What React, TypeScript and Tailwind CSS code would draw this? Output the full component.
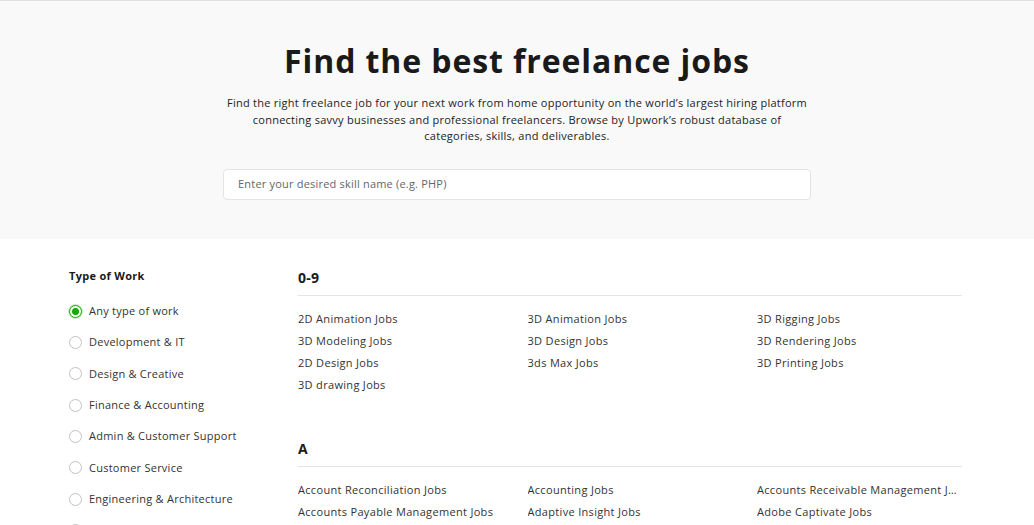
import React from "react";

const types = [
  "Any type of work",
  "Development & IT",
  "Design & Creative",
  "Finance & Accounting",
  "Admin & Customer Support",
  "Customer Service",
  "Engineering & Architecture",
  "Legal",
  "Sales & Marketing",
];

const sections: { title: string; items: string[] }[] = [
  {
    title: "0-9",
    items: [
      "2D Animation Jobs",
      "3D Animation Jobs",
      "3D Rigging Jobs",
      "3D Modeling Jobs",
      "3D Design Jobs",
      "3D Rendering Jobs",
      "2D Design Jobs",
      "3ds Max Jobs",
      "3D Printing Jobs",
      "3D drawing Jobs",
    ],
  },
  {
    title: "A",
    items: [
      "Account Reconciliation Jobs",
      "Accounting Jobs",
      "Accounts Receivable Management Jobs",
      "Accounts Payable Management Jobs",
      "Adaptive Insight Jobs",
      "Adobe Captivate Jobs",
      "Adobe Creative Suite Jobs",
      "Adobe Illustrator Jobs",
      "Adobe InDesign Jobs",
    ],
  },
];

const font = { fontFamily: '"Open Sans", "Noto Sans", Arial, sans-serif' };

export default function App() {
  return (
    <div className="min-h-screen bg-white text-[#222]" style={font}>
      <section className="border-t border-[#e0e0e0] bg-[#f9f9f9] pt-[40px] pb-[39px]">
        <h1 className="text-center text-[32px] leading-[40px] font-bold tracking-[0.9px] text-[#1a1a1a]">
          Find the best freelance jobs
        </h1>
        <p className="mt-[14px] text-center text-[11px] leading-[16.5px] tracking-[0.26px] text-[#222]">
          Find the right freelance job for your next work from home opportunity on the world’s largest hiring platform
          <br />
          connecting savvy businesses and professional freelancers. Browse by Upwork’s robust database of
          <br />
          categories, skills, and deliverables.
        </p>
        <div className="mx-auto mt-[24px] w-[588px]">
          <div className="flex h-[31px] items-center rounded-[4px] border border-[#e4e4e4] bg-white px-[14px] text-[11px] tracking-[0.2px] text-[#666]">
            Enter your desired skill name (e.g. PHP)
          </div>
        </div>
      </section>

      <div className="mx-auto flex w-[896px] pt-[29px]">
        <aside className="w-[229px] shrink-0">
          <div className="text-[11px] leading-[16px] font-bold tracking-[0.3px] text-[#1a1a1a]">Type of Work</div>
          <ul className="mt-[12px]">
            {types.map((t, i) => (
              <li key={t} className="flex h-[31.33px] items-center gap-[7px]">
                {i === 0 ? (
                  <span className="flex h-[13px] w-[13px] items-center justify-center rounded-full border border-[#14a800] bg-white shadow-[0_0_0_1px_#c9ecc3]">
                    <span className="h-[7px] w-[7px] rounded-full bg-[#14a800]" />
                  </span>
                ) : (
                  <span className="h-[13px] w-[13px] rounded-full border border-[#c2c2c2] bg-white" />
                )}
                <span className="text-[11px] tracking-[0.25px] text-[#333]">{t}</span>
              </li>
            ))}
          </ul>
        </aside>

        <main className="w-[664px] shrink-0">
          {sections.map((s, si) => (
            <div key={s.title} className={si > 0 ? "mt-[43px]" : ""}>
              <h2 className="border-b border-[#e4e4e4] pb-[7px] text-[14px] leading-[20px] font-bold tracking-[0.3px] text-[#1a1a1a]">
                {s.title}
              </h2>
              <div className="mt-[12px] grid grid-cols-3 gap-x-[24.5px]">
                {s.items.map((it) => (
                  <a key={it} className="truncate text-[11px] leading-[22px] tracking-[0.32px] text-[#333]">
                    {it}
                  </a>
                ))}
              </div>
            </div>
          ))}
        </main>
      </div>
    </div>
  );
}
